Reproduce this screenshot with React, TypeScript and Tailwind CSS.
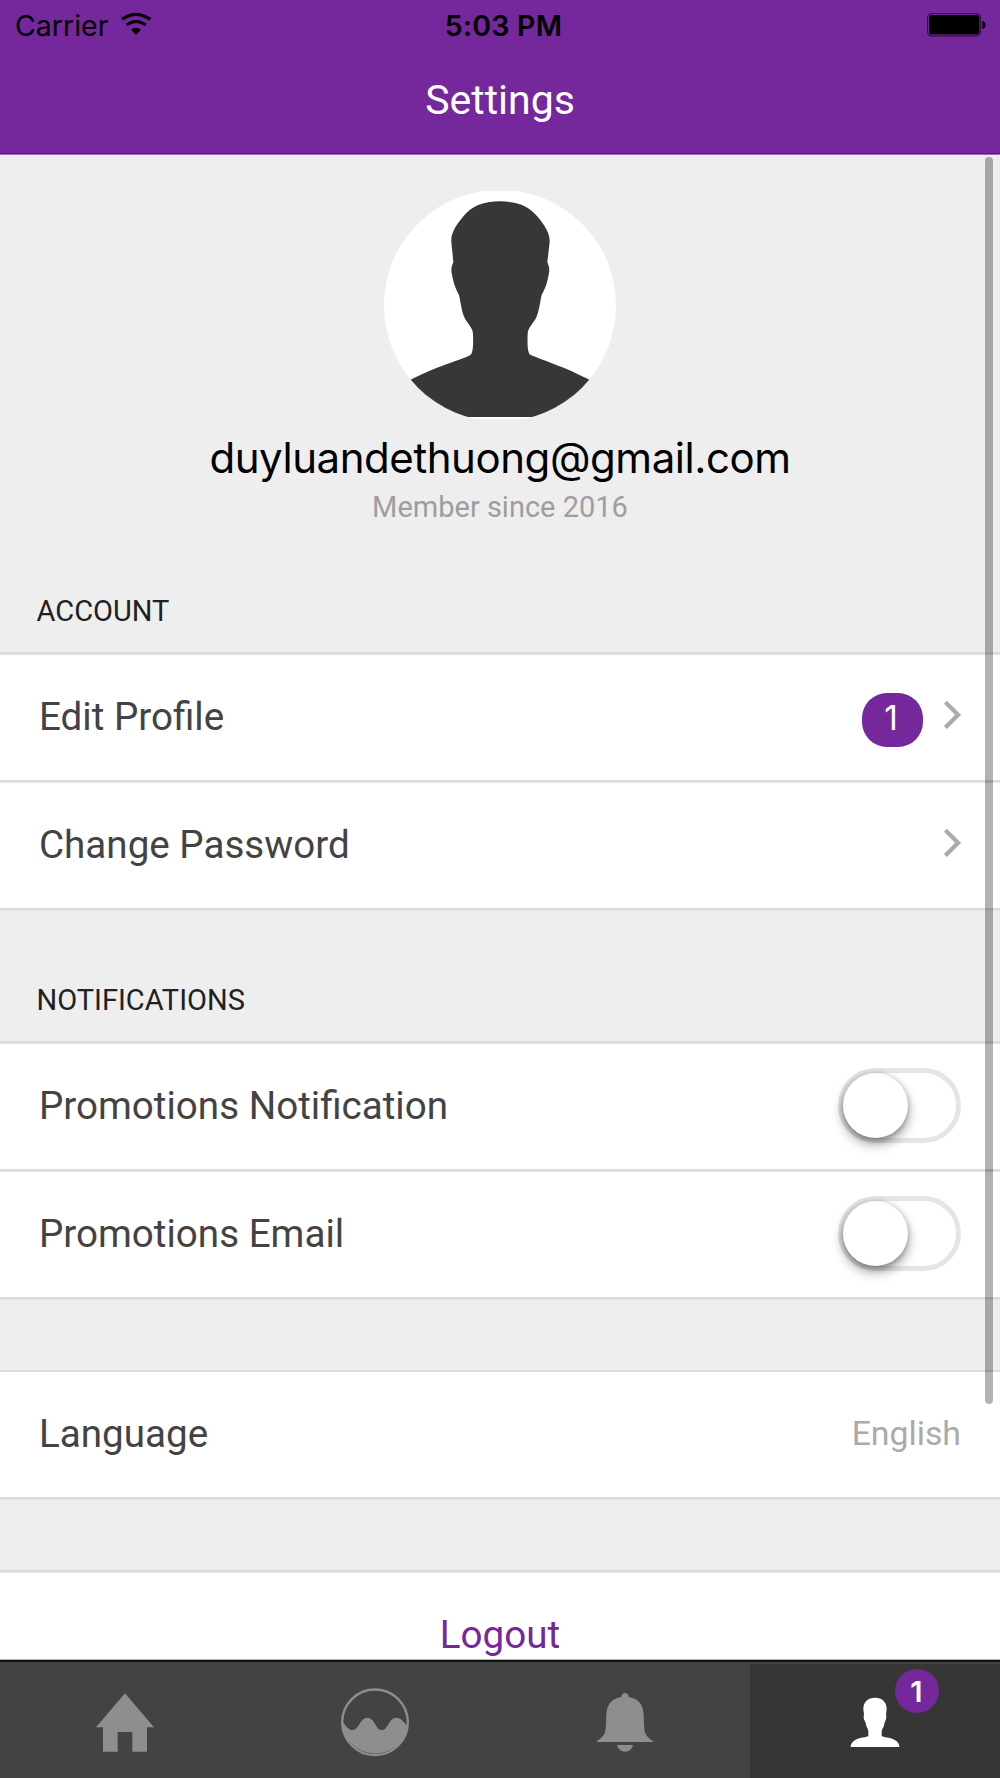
import type { ReactNode } from "react";

function WifiIcon() {
  return (
    <svg className="mt-[12px] ml-[13px] h-[22px] w-[30px]" viewBox="362 39 90 66" fill="none">
      <path d="M365 58 Q407 28 450 58" stroke="#000" strokeWidth="9.5" />
      <path d="M379 75 Q407 54 436 75" stroke="#000" strokeWidth="9" />
      <path d="M392 89 Q407 77 422 89 L407 104 Z" fill="#000" />
    </svg>
  );
}

function BatteryIcon() {
  return (
    <svg className="mt-[12px] h-6 w-[60px]" viewBox="0 0 60 24">
      <rect x="0.6" y="0.6" width="53" height="22.4" rx="3.5" fill="none" stroke="#2a0d3a" strokeWidth="1" />
      <rect x="2" y="2" width="50.4" height="19.6" rx="2" fill="#000" />
      <path d="M55.4 7.8 Q58.6 9 58.6 12 Q58.6 15 55.4 16.2 Z" fill="#000" />
    </svg>
  );
}

function Avatar() {
  return (
    <svg className="h-[228px] w-[232px]" viewBox="72 62 696 684">
      <defs>
        <clipPath id="avatar-circle">
          <circle cx="420" cy="406" r="348" />
        </clipPath>
      </defs>
      <g clipPath="url(#avatar-circle)">
        <rect x="72" y="62" width="696" height="684" fill="#fff" />
        <path
          fill="#373737"
          d="M421 93 C475 93 507 108 533 139 C556 167 570 190 569 215 L562 276 C567 287 569 295 567 308 C562 336 557 352 545 374 C538 404 538 423 527 445 C515 465 503 473 503 492 C502 515 502 540 508 551 C514 558 600 583 684 626 L760 666 L760 740 L80 740 L80 666 L156 626 C240 583 328 562 334 551 C340 540 340 515 339 492 C339 473 327 465 315 445 C304 423 304 404 297 374 C285 352 280 336 275 308 C273 295 275 287 280 276 L274 215 C272 190 286 167 309 139 C335 108 367 93 421 93 Z"
        />
      </g>
    </svg>
  );
}

function Chevron() {
  return (
    <svg className="h-[30px] w-[18px] -translate-y-[3px]" viewBox="0 0 18 30" fill="none">
      <path d="M2.4 2.2 L15.1 14.8 L2.4 27.4" stroke="#aaaaaa" strokeWidth="4.2" />
    </svg>
  );
}

function Toggle() {
  return (
    <div className="mb-[3px] h-[75px] w-[123px] rounded-full border-5 border-[#e5e5e5] bg-white">
      <div className="h-[65px] w-[65px] rounded-full bg-white shadow-[0_6px_12px_rgba(0,0,0,0.4),0_1px_5px_rgba(0,0,0,0.25)]" />
    </div>
  );
}

function Rule() {
  return <div className="h-[3px] shrink-0 border-b border-[#e4e4e4] bg-[#dbdbdb]" />;
}

function ThinRule() {
  return <div className="h-[2px] shrink-0 bg-[#dbdbdb]" />;
}

function Row({ label, children }: { label: string; children?: ReactNode }) {
  return (
    <div className="flex h-[125px] shrink-0 items-center justify-between bg-white pr-[39px] pl-[39px]">
      <span className="text-[38.6px] leading-none text-[#434343]">{label}</span>
      <div className="flex items-center">{children}</div>
    </div>
  );
}

function SectionTitle({ children, className }: { children: string; className: string }) {
  return (
    <h2 className={`shrink-0 pl-[36.5px] text-[29px] leading-[34px] text-[#212121] ${className}`}>{children}</h2>
  );
}

function HomeIcon() {
  return (
    <svg className="size-20" viewBox="255 996 240 240" fill="#8e8e8e">
      <path d="M375 1030 L462 1132 H441 V1205 H397 V1146 H353 V1205 H309 V1132 H288 Z" />
    </svg>
  );
}

function WaveIcon() {
  return (
    <svg className="size-20" viewBox="105 366 240 240">
      <circle cx="225" cy="487" r="98.5" fill="none" stroke="#8e8e8e" strokeWidth="7" />
      <path
        fill="#8e8e8e"
        d="M126 482 C136 497 146 510 157 510 C178 510 179 473 202 473 C225 473 226 510 245 510 C265 510 266 473 289 473 C303 473 313 487 324 500 A100 100 0 0 1 126 487 Z"
      />
    </svg>
  );
}

function BellIcon() {
  return (
    <svg className="size-20" viewBox="855 366 240 240" fill="#8e8e8e">
      <path d="M964 411 C964 395 986 395 986 411 C1012 415 1029 430 1031 463 C1032 492 1032 510 1036 520 C1041 532 1052 539 1062 546 H888 C898 539 909 530 914 520 C918 510 918 492 919 463 C921 430 938 415 964 411 Z" />
      <path d="M951 555 H999 C996 568 986 575 975 575 C964 575 954 568 951 555 Z" />
    </svg>
  );
}

function PersonIcon() {
  return (
    <svg className="size-20" viewBox="405 366 240 240" fill="#fff">
      <path d="M525 413 C547 413 560 426 560 447 L558 464 C560 468 559 474 557 481 C554 485 553 492 551 500 C548 506 545 508 545 514 V527 C550 533 570 531 583 539 C594 545 598 552 598 561 H452 C452 552 457 545 467 539 C480 531 500 533 505 527 V514 C505 508 502 506 500 500 C497 492 497 485 493 481 C491 474 490 468 492 464 L490 447 C490 426 503 413 525 413 Z" />
    </svg>
  );
}

function Tab({ active, badge, children }: { active?: boolean; badge?: string; children: ReactNode }) {
  return (
    <button
      className={`relative flex flex-1 items-start justify-center ${
        active ? "mt-[2px] bg-[#363636] pt-[18px]" : "pt-[20px]"
      }`}
    >
      {children}
      {badge && (
        <span className="absolute top-[5px] left-[145px] flex size-[44px] items-center justify-center rounded-full bg-[#75289c] pr-[1px] font-['Inter',sans-serif] text-[29px] leading-none font-semibold text-white">
          {badge}
        </span>
      )}
    </button>
  );
}

export default function App() {
  return (
    <div className="relative flex h-[1778px] w-[1000px] flex-col overflow-hidden bg-[#eeeeee] font-['Roboto',sans-serif]">
      <header className="h-[155px] shrink-0 border-b border-[#9d6cb8] bg-[#75289c]">
        <div className="flex h-[154px] flex-col border-b border-[#571b75]">
          <div className="grid h-[50px] grid-cols-[1fr_auto_1fr] pt-[1px] font-['Inter',sans-serif] text-[28.5px] leading-[50px] text-black">
            <div className="flex items-start pl-[15px]">
              <span>Carrier</span>
              <WifiIcon />
            </div>
            <span className="pl-[7px] font-semibold tracking-[0.25px]">5:03 PM</span>
            <div className="flex items-start justify-end pr-[13px]">
              <BatteryIcon />
            </div>
          </div>
          <h1 className="text-center text-[41px] leading-[100px] text-white">Settings</h1>
        </div>
      </header>

      <main className="flex h-[1504px] shrink-0 flex-col overflow-hidden">
        <section className="flex h-[439px] shrink-0 flex-col items-center pt-[35.5px]">
          <Avatar />
          <p className="mt-[12.5px] font-['Inter',sans-serif] text-[42px] leading-[54px] tracking-[-0.44px] text-black">
            duyluandethuong@gmail.com
          </p>
          <p className="mt-[5px] text-[29px] leading-[34px] text-[#9e9e9e]">Member since 2016</p>
        </section>

        <SectionTitle className="h-[58px]">ACCOUNT</SectionTitle>
        <Rule />
        <Row label="Edit Profile">
          <span className="mt-[4px] mr-[20px] flex h-[54px] w-[61px] items-center justify-center rounded-[25px] bg-[#75289c] pr-[3px] pb-[1px] font-['Inter',sans-serif] text-[33.5px] leading-none text-white">
            1
          </span>
          <Chevron />
        </Row>
        <Rule />
        <Row label="Change Password">
          <Chevron />
        </Row>
        <Rule />

        <SectionTitle className="h-[130px] pt-[72px]">NOTIFICATIONS</SectionTitle>
        <Rule />
        <Row label="Promotions Notification">
          <Toggle />
        </Row>
        <Rule />
        <Row label="Promotions Email">
          <Toggle />
        </Row>
        <Rule />

        <div className="h-[70px] shrink-0" />
        <ThinRule />
        <Row label="Language">
          <span className="-translate-y-[1px] text-[33.8px] leading-none text-[#aaaaaa]">English</span>
        </Row>
        <Rule />

        <div className="h-[70px] shrink-0" />
        <Rule />
        <button className="flex h-[125px] shrink-0 justify-center bg-white text-[38.6px] leading-[123px] text-[#75289c]">
          Logout
        </button>
      </main>

      <nav className="flex h-[119px] shrink-0 flex-col bg-[#434343]">
        <div className="h-px bg-[#b3b6b6]" />
        <div className="h-[2px] bg-[#111111]" />
        <div className="flex flex-1">
          <Tab>
            <HomeIcon />
          </Tab>
          <Tab>
            <WaveIcon />
          </Tab>
          <Tab>
            <BellIcon />
          </Tab>
          <Tab active badge="1">
            <PersonIcon />
          </Tab>
        </div>
      </nav>

      <div className="absolute top-[157px] left-[985px] h-[1247px] w-2 rounded-full bg-black/30" />
    </div>
  );
}
